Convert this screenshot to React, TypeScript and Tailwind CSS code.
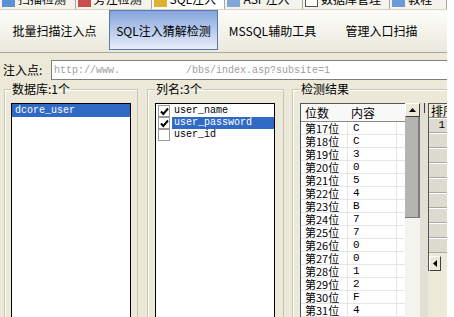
import type { ReactNode } from 'react'

const cjk = "font-['Noto_Sans_CJK_SC','Noto_Sans',sans-serif]"
const mono = "font-['Liberation_Mono','Noto_Sans_CJK_SC',monospace]"

const topTabs = [
  { label: '扫描检测', w: 'w-[80px]', icon: 'bg-[#5b8fd6]', active: false },
  { label: '旁注检测', w: 'w-[80px]', icon: 'bg-[#c84d4d]', active: false },
  { label: 'SQL注入', w: 'w-[78px]', icon: 'bg-[#e0b030]', active: true },
  { label: 'ASP注入', w: 'w-[82px]', icon: 'bg-[#7fa8d8]', active: false },
  { label: '数据库管理', w: 'w-[92px]', icon: 'bg-white border border-[#555]', active: false },
  { label: '教程', w: 'w-[60px]', icon: 'bg-[#6c9ad8]', active: false },
]

const toolButtons = ['批量扫描注入点', 'SQL注入猜解检测', 'MSSQL辅助工具', '管理入口扫描']

const results: [string, string][] = [
  ['第17位', 'C'],
  ['第18位', 'C'],
  ['第19位', '3'],
  ['第20位', '0'],
  ['第21位', '5'],
  ['第22位', '4'],
  ['第23位', 'B'],
  ['第24位', '7'],
  ['第25位', '7'],
  ['第26位', '0'],
  ['第27位', '0'],
  ['第28位', '1'],
  ['第29位', '2'],
  ['第30位', 'F'],
  ['第31位', '4'],
]

const columns = [
  { name: 'user_name', checked: true, selected: false },
  { name: 'user_password', checked: true, selected: true },
  { name: 'user_id', checked: false, selected: false },
]

function GroupBox({ title, className, children }: { title: string; className: string; children: ReactNode }) {
  return (
    <fieldset className={`shrink-0 border border-[#c8c6b8] shadow-[inset_1px_1px_0_#fff] h-[260px] ${className}`}>
      <legend className={`${cjk} text-[12px] leading-[14px] text-black px-[1px]`}>{title}</legend>
      {children}
    </fieldset>
  )
}

function CheckBox({ checked }: { checked: boolean }) {
  return (
    <span className="w-[12px] h-[12px] border border-[#9a9a9a] bg-white flex items-center justify-center shrink-0">
      {checked && (
        <svg width="9" height="9" viewBox="0 0 9 9">
          <path d="M1 4.5 L3.3 7 L8 1.5" stroke="#000" strokeWidth="2" fill="none" />
        </svg>
      )}
    </span>
  )
}

export default function App() {
  return (
    <div className="w-[454px] h-[317px] bg-white overflow-hidden">
      <div className="w-[447px] h-[317px] bg-[#ece9d8] overflow-hidden flex flex-col">
        {/* cut-off tab strip */}
        <div className="h-[10px] overflow-hidden flex border-b border-[#d8d4c0] bg-[#f4f3ec] shrink-0">
          {topTabs.map((t) => (
            <div
              key={t.label}
              className={`${t.w} h-[18px] flex items-start gap-[3px] pl-[2px] -mt-[8px] border-r border-[#a8a8a0] ${t.active ? 'bg-white' : ''}`}
            >
              <span className={`w-[13px] h-[14px] mt-[1px] ${t.icon}`} />
              <span className={`${cjk} text-[12px] leading-[14px] text-black whitespace-nowrap`}>{t.label}</span>
            </div>
          ))}
        </div>

        {/* toolbar */}
        <div className="h-[43px] shrink-0 flex bg-gradient-to-b from-[#fdfdfb] to-[#ebe9dd] border-b border-[#a8a89c]">
          {toolButtons.map((b, i) => (
            <div
              key={b}
              className={`w-[109px] h-[40px] flex items-center justify-center pt-[2px] ${cjk} text-[12px] text-black ${
                i === 1 ? 'border border-[#5a78b0] bg-gradient-to-b from-[#86a5dd] to-[#e9eef9]' : ''
              }`}
            >
              {b}
            </div>
          ))}
        </div>

        {/* url row */}
        <div className="flex items-center mt-[7px] shrink-0">
          <span className={`${cjk} text-[12px] text-black pl-[3px] w-[51px]`}>注入点:</span>
          <div className="flex-1 h-[20px] bg-white border border-[#7f7f7f] border-r-0 flex items-center pl-[2px]">
            <span className={`${mono} text-[10px] text-[#a0a0a0] whitespace-pre`}>
              http://www.           /bbs/index.asp?subsite=1
            </span>
          </div>
        </div>

        {/* groups */}
        <div className="flex mt-[2px] pl-[4px] gap-[9px]">
          <GroupBox title="数据库:1个" className="w-[134px] pl-[6px] pt-[7px]">
            <div className="w-[120px] h-[230px] bg-white border border-black">
              <div className={`h-[13px] bg-[#316ac5] text-white ${mono} text-[10px] leading-[13px] pl-[3px]`}>dcore_user</div>
            </div>
          </GroupBox>

          <GroupBox title="列名:3个" className="w-[137px] pl-[7px] pt-[7px]">
            <div className="w-[120px] h-[230px] bg-white border border-black pt-[1px]">
              {columns.map((c) => (
                <div key={c.name} className="h-[12px] flex items-center pl-[2px] gap-[2px]">
                  <CheckBox checked={c.checked} />
                  <span
                    className={`flex-1 h-[12px] ${mono} text-[10px] leading-[12px] pl-[2px] ${
                      c.selected ? 'bg-[#316ac5] text-white' : 'text-black'
                    }`}
                  >
                    {c.name}
                  </span>
                </div>
              ))}
            </div>
          </GroupBox>

          <GroupBox title="检测结果" className="w-[220px] pl-[7px] pt-[7px] -ml-[1px]">
            <div className="flex items-start">
              {/* results grid */}
              <div className="w-[105px] h-[230px] bg-white border-l border-t border-[#555] overflow-hidden">
                <div className={`h-[18px] flex ${cjk} text-[12px] leading-[17px] border-b border-[#8a8a8a] bg-[#f8f8f6]`}>
                  <span className="w-[47px] pl-[4px]">位数</span>
                  <span className="w-[49px] pl-[3px]">内容</span>
                </div>
                {results.map(([pos, val]) => (
                  <div key={pos} className="h-[13px] flex border-b border-[#e6e6e6] overflow-hidden">
                    <span className={`w-[47px] pl-[4px] ${cjk} text-[11px] leading-[12px] border-r border-[#e6e6e6]`}>{pos}</span>
                    <span className={`w-[49px] pl-[5px] ${mono} text-[11px] leading-[12px] border-r border-[#e6e6e6]`}>{val}</span>
                  </div>
                ))}
              </div>

              {/* vertical scrollbar */}
              <div className="w-[15px] h-[230px] flex flex-col bg-[#f4f3ee]">
                <div className="h-[14px] bg-[#ece9d8] border border-t-white border-l-white border-r-[#404040] border-b-[#404040] flex items-center justify-center">
                  <svg width="7" height="4" viewBox="0 0 7 4">
                    <path d="M0 4 L3.5 0 L7 4 Z" fill="#000" />
                  </svg>
                </div>
                <div className="h-[101px] bg-[#b4b4b0] border-r-2 border-[#7a7a78] border-b border-b-[#7a7a78]" />
              </div>

              {/* splitter */}
              <div className="w-[8px] h-[230px] bg-[#e2e0d4] flex justify-center">
                <div className="w-[1px] h-[10px] bg-[#404040]" />
              </div>

              {/* right grid */}
              <div className="w-[60px] flex flex-col border-l border-t border-[#555]">
                <div className={`h-[14px] bg-[#ece9d8] ${cjk} text-[12px] leading-[14px] pl-[2px] border-b border-[#8a8a8a]`}>排序</div>
                {Array.from({ length: 9 }).map((_, i) => (
                  <div
                    key={i}
                    className={`h-[15px] w-[19px] bg-[#dddbd0] border-b border-r border-[#a8a89c] border-t border-t-white text-right pr-[2px] ${mono} text-[11px] leading-[13px]`}
                  >
                    {i === 0 ? '1' : ''}
                  </div>
                ))}
                <div className="h-[3px]" />
                <div className="h-[15px] w-[12px] bg-[#ece9d8] border border-t-white border-l-white border-r-[#404040] border-b-[#404040] flex items-center justify-center">
                  <svg width="4" height="7" viewBox="0 0 4 7">
                    <path d="M4 0 L0 3.5 L4 7 Z" fill="#000" />
                  </svg>
                </div>
              </div>
            </div>
          </GroupBox>
        </div>
      </div>
    </div>
  )
}
